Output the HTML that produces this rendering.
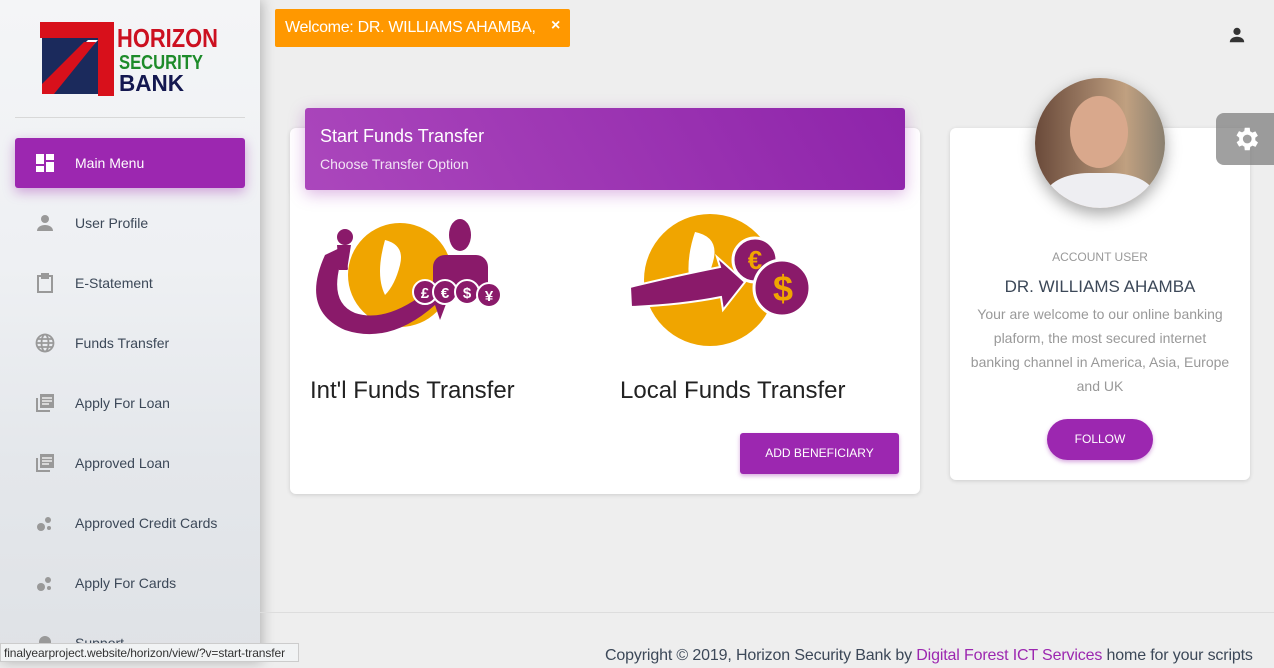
<!DOCTYPE html>
<html><head><meta charset="utf-8"><style>
*{box-sizing:border-box;margin:0;padding:0}
body{width:1274px;height:662px;overflow:hidden;background:#eeeeee;font-family:"Liberation Sans",sans-serif;position:relative}
.side{position:absolute;left:0;top:0;width:260px;height:662px;background:linear-gradient(180deg,#f4f5f7 0%,#eef0f3 40%,#e4e7eb 70%,#dfe2e6 100%);box-shadow:2px 0 12px rgba(0,0,0,.25)}
.sep{position:absolute;left:15px;top:117px;width:230px;height:1px;background:#d8d8d8}
.item{position:absolute;left:15px;width:230px;height:50px;color:#3c4858;font-size:14px;display:flex;align-items:center}
.item .ic{position:absolute;left:20px;top:15px;width:20px;height:20px}
.item span{position:absolute;left:60px}
.active{background:#9c27b0;color:#fff;border-radius:3px;box-shadow:0 4px 12px rgba(156,39,176,.4)}
.welcome{position:absolute;left:275px;top:9px;width:295px;height:38px;background:#ff9800;color:#fff;font-size:16px;padding:10px 10px;border-radius:2px;letter-spacing:-.3px}
.card{position:absolute;background:#fff;border-radius:6px;box-shadow:0 1px 4px rgba(0,0,0,.14)}
.hdr{position:absolute;left:305px;top:108px;width:600px;height:82px;background:linear-gradient(60deg,#ab47bc,#8e24aa);border-radius:3px;color:#fff;padding:18px 15px;box-shadow:0 4px 16px rgba(156,39,176,.35)}
.btn{position:absolute;background:#9c27b0;color:#fff;font-size:12px;text-align:center;box-shadow:0 2px 4px rgba(156,39,176,.4)}
</style></head><body>
<div class="side">
 <svg style="position:absolute;left:40px;top:20px" width="180" height="76" viewBox="0 0 180 76">
  <rect x="2" y="16" width="56" height="58" fill="#1b2a5c"/>
  <polygon points="2,66 48,20 58,20 8,74 2,74" fill="#fff"/>
  <polygon points="2,74 2,64 44,22 56,22 14,74" fill="#d8101b"/>
  <polygon points="0,2 74,2 74,76 58,76 58,18 0,18" fill="#d8101b"/>
  <text x="77" y="27" font-family="Liberation Sans" font-weight="bold" font-size="26" fill="#cc1020" textLength="101" lengthAdjust="spacingAndGlyphs">HORIZON</text>
  <text x="79" y="49" font-family="Liberation Sans" font-weight="bold" font-size="20" fill="#1d8b2a" textLength="84" lengthAdjust="spacingAndGlyphs">SECURITY</text>
  <text x="79" y="71" font-family="Liberation Sans" font-weight="bold" font-size="23" fill="#141850" textLength="65" lengthAdjust="spacingAndGlyphs">BANK</text>
 </svg>
 <div class="sep"></div>
 <div class="item active" style="top:138px"><svg class="ic" viewBox="0 0 20 20"><rect x="1" y="1" width="8" height="10" fill="#fff"/><rect x="11" y="1" width="8" height="6" fill="#fff"/><rect x="1" y="13" width="8" height="6" fill="#fff"/><rect x="11" y="9" width="8" height="10" fill="#fff"/></svg><span>Main Menu</span></div>
 <div class="item" style="top:198px"><svg class="ic" viewBox="0 0 20 20" fill="#999"><circle cx="10" cy="6" r="4"/><path d="M2 18c0-4 4-6 8-6s8 2 8 6z"/></svg><span>User Profile</span></div>
 <div class="item" style="top:258px"><svg class="ic" viewBox="0 0 20 20" fill="none" stroke="#999" stroke-width="2"><rect x="3" y="3" width="14" height="16"/><rect x="7" y="1" width="6" height="4" fill="#999"/></svg><span>E-Statement</span></div>
 <div class="item" style="top:318px"><svg class="ic" viewBox="0 0 20 20" fill="none" stroke="#999" stroke-width="1.8"><circle cx="10" cy="10" r="8.5"/><ellipse cx="10" cy="10" rx="3.5" ry="8.5"/><path d="M2 10h16M3 6h14M3 14h14"/></svg><span>Funds Transfer</span></div>
 <div class="item" style="top:378px"><svg class="ic" viewBox="0 0 20 20" fill="#999"><path d="M1 5h2v12h12v2H1z"/><rect x="5" y="1" width="14" height="14"/><path d="M7 5h10M7 8h10M7 11h7" stroke="#eee" stroke-width="1.5"/></svg><span>Apply For Loan</span></div>
 <div class="item" style="top:438px"><svg class="ic" viewBox="0 0 20 20" fill="#999"><path d="M1 5h2v12h12v2H1z"/><rect x="5" y="1" width="14" height="14"/><path d="M7 5h10M7 8h10M7 11h7" stroke="#eee" stroke-width="1.5"/></svg><span>Approved Loan</span></div>
 <div class="item" style="top:498px"><svg class="ic" viewBox="0 0 20 20" fill="#999"><circle cx="6" cy="14" r="4"/><circle cx="13" cy="7" r="3"/><circle cx="14" cy="15" r="2"/></svg><span>Approved Credit Cards</span></div>
 <div class="item" style="top:558px"><svg class="ic" viewBox="0 0 20 20" fill="#999"><circle cx="6" cy="14" r="4"/><circle cx="13" cy="7" r="3"/><circle cx="14" cy="15" r="2"/></svg><span>Apply For Cards</span></div>
 <div class="item" style="top:618px"><svg class="ic" viewBox="0 0 20 20" fill="#999"><path d="M4 14V9a6 6 0 0 1 12 0v5l2 2H2z"/></svg><span>Support</span></div>
</div>
<div style="position:absolute;left:0;top:643px;width:299px;height:19px;background:#f1f3f4;border:1px solid #ccc;font-size:12px;color:#333;padding:2px 3px;letter-spacing:-.1px">finalyearproject.website/horizon/view/?v=start-transfer</div>
<div class="welcome">Welcome: DR. WILLIAMS AHAMBA,<span style="position:absolute;right:10px;top:8px;font-weight:bold">×</span></div>
<svg style="position:absolute;left:1228px;top:26px" width="18" height="18" viewBox="0 0 20 20" fill="#333"><circle cx="10" cy="6" r="4"/><path d="M2 18c0-4 4-6 8-6s8 2 8 6z"/></svg>
<div class="card" style="left:290px;top:128px;width:630px;height:366px"></div>
<div class="hdr"><div style="font-size:18px">Start Funds Transfer</div><div style="font-size:14px;margin-top:9px;opacity:.85">Choose Transfer Option</div></div>
<svg style="position:absolute;left:305px;top:215px" width="210" height="130" viewBox="0 0 210 130">
 <circle cx="95" cy="60" r="52" fill="#f0a500"/>
 <path d="M80 25q20 5 15 25t-15 30q-10-20 0-55z" fill="#fff"/>
 <rect x="128" y="40" width="55" height="40" rx="12" fill="#8a1a6a"/><ellipse cx="155" cy="20" rx="11" ry="16" fill="#8a1a6a"/>
 <circle cx="40" cy="22" r="8" fill="#8a1a6a"/><path d="M32 30h14l-4 25h-8z" fill="#8a1a6a"/>
 <path d="M20 40q-25 55 20 75q45 15 90-25l5 15 15-40-40 5 10 8q-40 30-70 20q-25-10-15-48l8 5-2-25z" fill="#8a1a6a"/>
 <g fill="#8a1a6a" stroke="#fff" stroke-width="2"><circle cx="120" cy="77" r="12"/><circle cx="140" cy="77" r="12"/><circle cx="162" cy="77" r="12"/><circle cx="184" cy="80" r="12"/></g>
 <g fill="#fff" font-family="Liberation Sans" font-weight="bold" font-size="15" text-anchor="middle"><text x="120" y="83">£</text><text x="140" y="83">€</text><text x="162" y="83">$</text><text x="184" y="86">¥</text></g>
</svg>
<svg style="position:absolute;left:625px;top:212px" width="190" height="140" viewBox="0 0 190 140">
 <circle cx="85" cy="68" r="66" fill="#f0a500"/>
 <path d="M70 20q25 5 18 30t-20 35q-10-30 2-65z" fill="#fff"/>
 <path d="M5 75q40-10 90-20l-3-10 28 25-22 28-2-13q-40 8-90 10z" fill="#8a1a6a" stroke="#fff" stroke-width="2"/>
 <circle cx="130" cy="48" r="22" fill="#8a1a6a" stroke="#fff" stroke-width="3"/>
 <circle cx="157" cy="76" r="28" fill="#8a1a6a" stroke="#fff" stroke-width="3"/>
 <text x="130" y="57" fill="#f0a500" font-family="Liberation Sans" font-weight="bold" font-size="26" text-anchor="middle">€</text>
 <text x="158" y="89" fill="#f0a500" font-family="Liberation Sans" font-weight="bold" font-size="36" text-anchor="middle">$</text>
</svg>
<div style="position:absolute;left:310px;top:377px;font-size:24px;color:#222">Int'l Funds Transfer</div>
<div style="position:absolute;left:620px;top:377px;font-size:24px;color:#222">Local Funds Transfer</div>
<div class="btn" style="left:740px;top:433px;width:159px;height:41px;line-height:41px;border-radius:3px">ADD BENEFICIARY</div>
<div class="card" style="left:950px;top:128px;width:300px;height:352px"></div>
<div style="position:absolute;left:1035px;top:78px;width:130px;height:130px;border-radius:50%;overflow:hidden;background:linear-gradient(90deg,#6a4a3a,#9a7a62 40%,#c0a080 70%,#8a8070);box-shadow:0 6px 16px rgba(0,0,0,.35)">
 <div style="position:absolute;left:35px;top:18px;width:58px;height:72px;border-radius:50%;background:#d9a88c"></div>
 <div style="position:absolute;left:10px;top:95px;width:110px;height:60px;border-radius:40% 40% 0 0;background:#eeeef2"></div>
</div>
<div style="position:absolute;left:950px;top:250px;width:300px;text-align:center;font-size:12px;color:#999">ACCOUNT USER</div>
<div style="position:absolute;left:950px;top:277px;width:300px;text-align:center;font-size:17px;color:#3c4858">DR. WILLIAMS AHAMBA</div>
<div style="position:absolute;left:970px;top:302px;width:260px;text-align:center;font-size:14px;line-height:24px;color:#999">Your are welcome to our online banking plaform, the most secured internet banking channel in America, Asia, Europe and UK</div>
<div class="btn" style="left:1047px;top:419px;width:106px;height:41px;line-height:41px;border-radius:21px">FOLLOW</div>
<div style="position:absolute;left:1216px;top:113px;width:58px;height:52px;background:rgba(120,120,120,.7);border-radius:8px 0 0 8px"><svg style="position:absolute;left:15px;top:11px" width="30" height="30" viewBox="0 0 24 24" fill="#fff"><path d="M19.4 13a7.5 7.5 0 0 0 0-2l2.1-1.6-2-3.5-2.5 1a7 7 0 0 0-1.7-1L15 3h-4l-.4 2.7a7 7 0 0 0-1.7 1l-2.5-1-2 3.5L6.6 11a7.5 7.5 0 0 0 0 2l-2.1 1.6 2 3.5 2.5-1a7 7 0 0 0 1.7 1L11 21h4l.4-2.7a7 7 0 0 0 1.7-1l2.5 1 2-3.5zM13 15.5a3.5 3.5 0 1 1 0-7 3.5 3.5 0 0 1 0 7z"/></svg></div>
<div style="position:absolute;left:260px;top:612px;width:1014px;height:1px;background:#ddd"></div>
<div style="position:absolute;left:605px;top:647px;font-size:16px;letter-spacing:-.15px;color:#3c4858;white-space:nowrap">Copyright © 2019, Horizon Security Bank by <span style="color:#9c27b0">Digital Forest ICT Services</span> home for your scripts</div>
</body></html>
